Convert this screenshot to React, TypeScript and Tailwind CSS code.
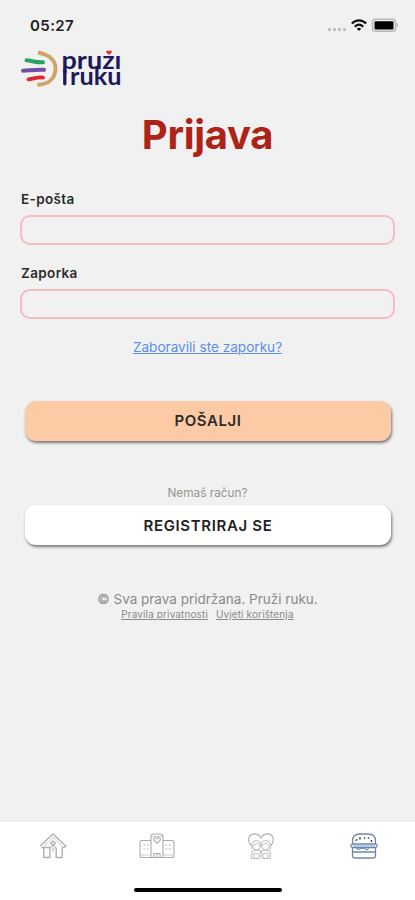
import React, { useState } from 'react';

const Logo: React.FC = () => (
  <svg width="104" height="40" viewBox="20 49 104 40" className="overflow-visible" aria-label="Pruži ruku">
    <g fill="none" strokeLinecap="round">
      <path d="M38 52.5C49 54.5 56 60.5 55.5 69.5C55 79 48 84.3 37.5 84.8" stroke="#cda469" strokeWidth="3.9" strokeLinecap="butt" />
      <path d="M26.5 60.3C31 60.3 36 62.8 43 62.3" stroke="#27a260" strokeWidth="4" />
      <path d="M23 70.8C29 70.6 37 69.2 44 69.8" stroke="#6f4fa3" strokeWidth="4" />
      <path d="M28.5 79.3C33 79 38 76.6 43 77.6" stroke="#df2632" strokeWidth="3.8" />
    </g>
    <g fill="#1d1a5b" fontFamily="Lato, sans-serif" fontWeight="700">
      <text x="61.5" y="69" fontSize="25.5" textLength="60" lengthAdjust="spacingAndGlyphs">pruzı</text>
      <text x="70" y="85.3" fontSize="25" textLength="51.5" lengthAdjust="spacingAndGlyphs">ruku</text>
    </g>
    <path d="M64.8 70V83.8" stroke="#1d1a5b" strokeWidth="3.3" strokeLinecap="round" />
    <path d="M109 55L106.4 52.4C105.4 50.8 108 49.7 109 51.4C110 49.7 112.6 50.8 111.6 52.4Z" fill="#e12c32" />
  </svg>
);

const StatusIcons: React.FC = () => (
  <svg width="72" height="16" viewBox="326 17 72 16">
    <g fill="#bdbdbd">
      <rect x="328" y="28" width="3" height="3" rx="1" />
      <rect x="333" y="28" width="3" height="3" rx="1" />
      <rect x="338" y="28" width="3" height="3" rx="1" />
      <rect x="343" y="28" width="3" height="3" rx="1" />
    </g>
    <g fill="none" stroke="#111" strokeWidth="2.1">
      <path d="M351.8 23.6C356 19.3 362 19.3 366.2 23.6" />
      <path d="M354.7 26.7C357.4 24.2 360.6 24.2 363.3 26.7" />
    </g>
    <path d="M356.7 28.8Q359 26.9 361.3 28.8L359 31Z" fill="#111" />
    <rect x="372.5" y="19.3" width="23" height="12" rx="3" fill="none" stroke="#b8b8b8" strokeWidth="1.6" />
    <rect x="374.5" y="21.2" width="19" height="8.2" rx="1.2" fill="#000" />
    <path d="M397.2 23.5V27" stroke="#b8b8b8" strokeWidth="1.4" />
  </svg>
);

const HomeIcon: React.FC = () => (
  <svg width="28" height="26" viewBox="0 0 28 26" fill="none" stroke="#b0b0b0" strokeWidth="1.4" strokeLinejoin="round">
    <path d="M1.2 13L14 1L26.8 13L25.2 14.5H23.2V24.5H17.2V17.5V14.5M10.8 14.5V24.5H4.8V14.5H2.8Z" />
    <path d="M4.5 13.5L14 4.5L23.5 13.5" strokeWidth="0.7" />
    <path d="M14 8L16.3 10.3L14 12.6L11.7 10.3Z" />
    <path d="M10.8 16Q11 13.5 14 13.2Q17 13.5 17.2 16M14 15V19" strokeWidth="1" />
  </svg>
);

const BuildingIcon: React.FC = () => (
  <svg width="36" height="26" viewBox="0 0 36 26" fill="none" stroke="#acacac" strokeWidth="1.1">
    <path d="M12 24.5V3.5Q12 1 14.5 1H21.5Q24 1 24 3.5V24.5" />
    <path d="M12 7.5H3Q1 7.5 1 9.5V22.5Q1 24.5 3 24.5H33Q35 24.5 35 22.5V9.5Q35 7.5 33 7.5H24" />
    <path d="M1 22H12M24 22H35M12 3.5H24" stroke="#cccccc" />
    <path d="M18 10.3L15 7.5C13.5 5.2 16.6 3.8 18 5.8C19.4 3.8 22.5 5.2 21 7.5Z" />
    <path d="M15 24.5V20.5H21V24.5M18 20.5V24.5" />
    <path d="M4.5 12H6M8 12H9.5M4.5 16H6M8 16H9.5M26.5 12H28M30 12H31.5M26.5 16H28M30 16H31.5" />
  </svg>
);

const FamilyIcon: React.FC = () => (
  <svg width="26" height="27" viewBox="0 0 26 27" fill="none" stroke="#b9b9b9" strokeWidth="1">
    <path d="M3.5 13C-1 8 0 1 6.5 1C9.5 1 12 2.8 13 5C14 2.8 16.5 1 19.5 1C26 1 27 8 22.5 13" strokeWidth="1.3" />
    <path d="M4 16C2.5 11 5 7.5 8.5 7.5C11.5 7.5 13 10 13 14C13 10 14.5 7.5 17.5 7.5C21 7.5 23.5 11 22 16" />
    <path d="M5 12Q9 12 10 9.5Q11 12 12 12M14 12Q17 12 18 9.5Q19 12 21 12" strokeWidth="0.8" />
    <path d="M5 12.5Q5 17 8.5 17T12 12.5M14 12.5Q14 17 17.5 17T21 12.5" />
    <path d="M5.5 25.5H3.7V20Q3.7 17 7 17H10Q13 17 13 20Q13 17 16 17H19Q22.3 17 22.3 20V25.5H20.5M6 20V25.5H11V20M15 20V25.5H20V20M13 20V25.5" />
    <path d="M7 20Q8.5 22 10 20M16 20Q17.5 22 19 20" />
  </svg>
);

const BurgerIcon: React.FC = () => (
  <svg width="28" height="26" viewBox="0 0 28 26" fill="none" stroke="#6f88a8" strokeWidth="1.3" strokeLinejoin="round">
    <path d="M2.5 11V8Q2.5 1 10 1H18Q25.5 1 25.5 8V11Z" />
    <path d="M2.5 11.5Q.5 11.5 .8 13Q1 14.5 3 14.5H25Q27 14.5 27.2 13Q27.5 11.5 25.5 11.5" />
    <path d="M3 13H25" stroke="#a9c3e2" strokeWidth="1.6" />
    <path d="M6 15Q8.5 17.8 11 15.5L14 15L16.5 17L19 15.5" fill="#9dbce0" strokeWidth="1" />
    <path d="M2.5 14.5V22.5Q2.5 25 5 25H23Q25.5 25 25.5 22.5V14.5M2.5 19H25.5" />
    <path d="M5.5 7.5L7.5 6.5M10 4V6.5M14 5.5L15 4.5M18 4.5L19 5.5M21.5 7V9" stroke="#29394d" />
  </svg>
);

interface FieldProps {
  id: string;
  label: string;
  type: string;
  value: string;
  onChange: (value: string) => void;
}

const Field: React.FC<FieldProps> = ({ id, label, type, value, onChange }) => (
  <div className="h-[74px]">
    <label htmlFor={id} className="block h-[25px] pl-px text-[13.5px] leading-[18px] font-semibold tracking-[0.36px] text-[#2b2b2b]">
      {label}
    </label>
    <input
      id={id}
      type={type}
      value={value}
      onChange={(e) => onChange(e.target.value)}
      className="block h-[30px] w-full rounded-[10px] border-2 border-[#f5bcc1] bg-transparent px-3 text-sm outline-none"
    />
  </div>
);

const App: React.FC = () => {
  const [email, setEmail] = useState('');
  const [password, setPassword] = useState('');

  return (
    <div className="flex h-[900px] w-[415px] flex-col overflow-hidden bg-[#f1f1f1] font-['Inter',sans-serif]">
      <header className="flex h-[49px] shrink-0 items-start justify-between pt-[17px] pr-[17px] pl-[30px]">
        <span className="text-[15px] leading-[17px] font-semibold tracking-[0.4px] text-[#222]">05:27</span>
        <StatusIcons />
      </header>

      <div className="h-10 shrink-0 pl-5">
        <Logo />
      </div>

      <main className="flex flex-1 flex-col px-5">
        <h1 className="h-[101px] pt-[22px] text-center text-[40px] leading-[48px] font-bold tracking-[-0.3px] text-[#ad2318]">Prijava</h1>

        <form onSubmit={(e) => e.preventDefault()}>
          <Field id="email" label="E-pošta" type="email" value={email} onChange={setEmail} />
          <Field id="password" label="Zaporka" type="password" value={password} onChange={setPassword} />
          <div className="h-[63px] text-center text-[13.6px] leading-[18px] text-[#5b8def]">
            <a href="#" className="underline">Zaboravili ste zaporku?</a>
          </div>
          <button
            type="submit"
            className="mx-auto block h-10 w-[366px] rounded-[11px] bg-[#fdcaa6] pl-px text-[15px] font-semibold tracking-[0.6px] text-[#2b2b2b] shadow-[1px_2px_3px_rgba(0,0,0,0.5)]"
          >
            POŠALJI
          </button>
        </form>

        <p className="mt-[44px] h-5 text-center text-[11.8px] leading-4 text-[#959595]">Nemaš račun?</p>
        <button
          type="button"
          className="mx-auto block h-10 w-[366px] shrink-0 rounded-[11px] bg-white pt-0.5 pl-px text-[15px] font-semibold tracking-[0.65px] text-[#222] shadow-[1px_2px_3px_rgba(0,0,0,0.5)]"
        >
          REGISTRIRAJ SE
        </button>

        <footer className="mt-[45px] text-center text-[#8a8a8a]">
          <p className="text-[13.5px] leading-[18px]">© Sva prava pridržana. Pruži ruku.</p>
          <div className="flex justify-center gap-2 text-[10px] leading-3 tracking-[0.12px]">
            <a href="#" className="underline">Pravila privatnosti</a>
            <a href="#" className="underline">Uvjeti korištenja</a>
          </div>
        </footer>
      </main>

      <nav className="h-[78px] shrink-0 bg-white">
        <div className="flex h-[66px] items-start pt-[11px]">
          <a href="#" className="flex w-[106px] justify-center"><HomeIcon /></a>
          <a href="#" className="flex w-[102px] justify-center"><BuildingIcon /></a>
          <a href="#" className="flex w-[105px] justify-center"><FamilyIcon /></a>
          <a href="#" className="flex w-[102px] justify-center"><BurgerIcon /></a>
        </div>
        <div className="mx-auto h-1 w-[148px] rounded-full bg-black" />
      </nav>
    </div>
  );
};

export default App;
